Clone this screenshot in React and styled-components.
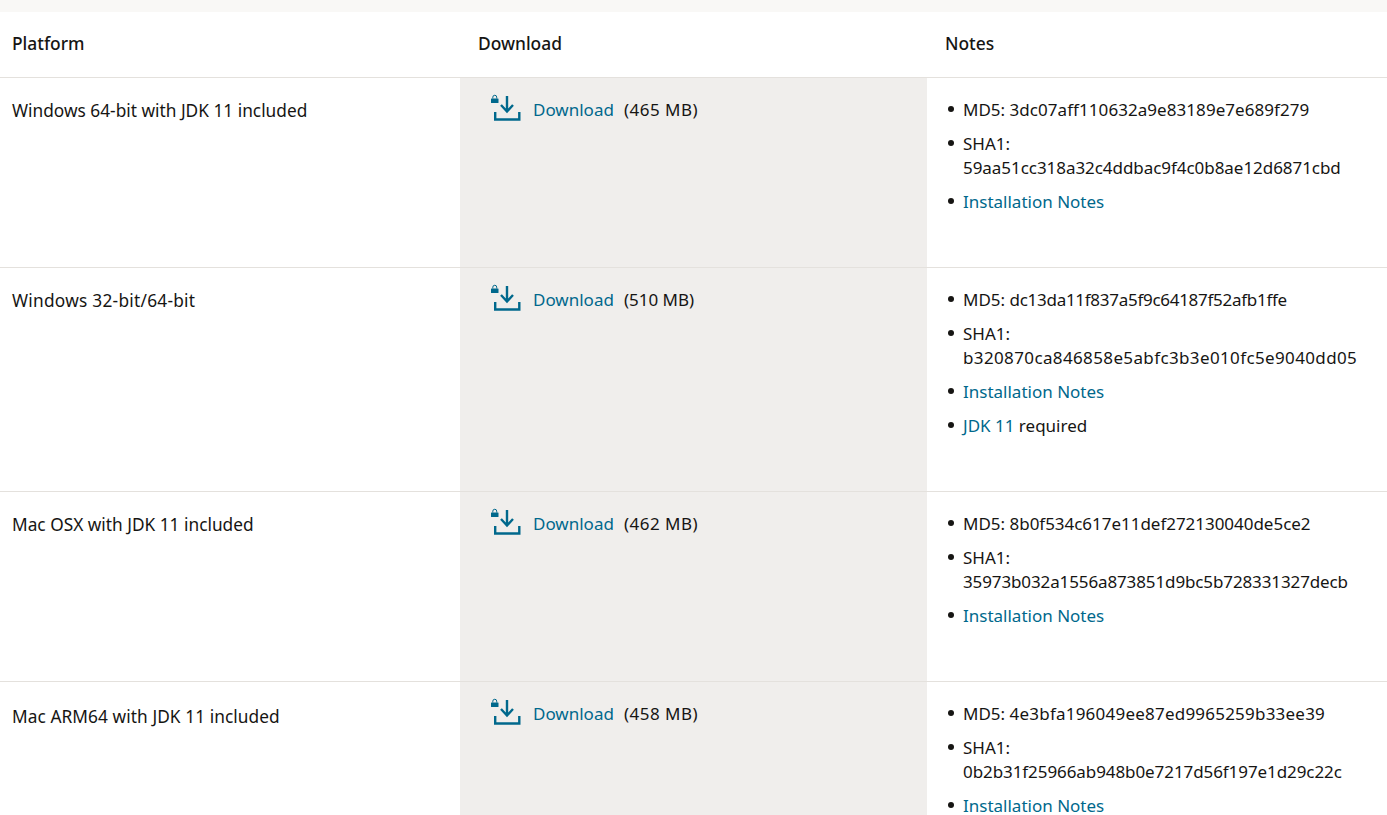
import React from 'react'
import styled, { createGlobalStyle } from 'styled-components'

const GlobalStyle = createGlobalStyle`
  html, body {
    margin: 0;
    padding: 0;
    height: 815px;
    overflow: hidden;
    background: #fff;
    font-family: "Noto Sans", "Open Sans", sans-serif;
    color: #161513;
  }
`

const TopBand = styled.div`
  height: 12px;
  background: #f9f8f6;
`

const Row = styled.div`
  display: grid;
  grid-template-columns: 460px 467px 460px;
  border-bottom: 1px solid #e4e1dd;
  font-size: 17px;
  line-height: 24px;
`

const HeadRow = styled(Row)`
  box-sizing: border-box;
  height: 66px;
  padding-bottom: 3px;
  align-items: center;
  font-weight: 500;
  font-size: 17.4px;
`

const HeadCell = styled.div`
  padding-left: ${(p) => (p.$first ? '12px' : '18px')};
`

const PlatformCell = styled.div`
  padding: ${(p) => (p.$low ? '23px' : '21px')} 12px 0;
  font-size: 17.3px;
`

const DownloadCell = styled.div`
  background: #f0eeec;
  padding: 16px 0 0 30px;
  display: flex;
  align-items: flex-start;
`

const DownloadIcon = styled.svg`
  width: 32px;
  height: 28px;
  margin-right: 11px;
  flex: none;
`

const Link = styled.a`
  color: #00688c;
  text-decoration: none;
`

const DownloadLink = styled(Link)`
  margin-top: 4px;
`

const Size = styled.span`
  margin: 4px 0 0 10px;
`

// the original face has other glyph widths, so each value gets its own tracking
const Tracked = styled.span`
  letter-spacing: ${(p) => p.$track || 0}px;
`

const NotesCell = styled.div`
  padding: 20px 18px 43px;
`

const NotesList = styled.ul`
  list-style: none;
  margin: 0;
  padding: 0;
`

const Note = styled.li`
  position: relative;
  padding-left: 18px;
  margin-bottom: 10px;
  white-space: nowrap;

  &::before {
    content: '';
    position: absolute;
    left: 3px;
    top: 8px;
    width: 6px;
    height: 6px;
    border-radius: 50%;
    background: #161513;
  }
`

const LockDownload = () => (
  <DownloadIcon viewBox="0 0 32 28" aria-hidden="true">
    <rect x="1" y="4.500" width="7.500" height="4.500" rx="0.5" fill="#00688c" />
    <path d="M2.800 4.500V3.200a1.950 1.950 0 0 1 3.900 0v1.300" fill="none" stroke="#00688c" strokeWidth="1" />
    <path d="M17 2v15.500M11 11l6 6.500 6-6.500" fill="none" stroke="#00688c" strokeWidth="2.400" />
    <path d="M5.200 18v7.500h24.100V18" fill="none" stroke="#00688c" strokeWidth="2.400" />
  </DownloadIcon>
)

const rows = [
  {
    platform: 'Windows 64-bit with JDK 11 included',
    size: '(465 MB)',
    md5: '3dc07aff110632a9e83189e7e689f279',
    sha1: '59aa51cc318a32c4ddbac9f4c0b8ae12d6871cbd',
    tracks: { platform: 0, size: 0.5, md5: 0.06, sha1: -0.05 },
  },
  {
    platform: 'Windows 32-bit/64-bit',
    size: '(510 MB)',
    md5: 'dc13da11f837a5f9c64187f52afb1ffe',
    sha1: 'b320870ca846858e5abfc3b3e010fc5e9040dd05',
    needsJdk: true,
    tracks: { platform: 0.25, size: 0, md5: -0.28, sha1: 0.37 },
  },
  {
    platform: 'Mac OSX with JDK 11 included',
    size: '(462 MB)',
    md5: '8b0f534c617e11def272130040de5ce2',
    sha1: '35973b032a1556a873851d9bc5b728331327decb',
    tracks: { platform: 0, size: 0.5, md5: -0.03, sha1: -0.12 },
  },
  {
    platform: 'Mac ARM64 with JDK 11 included',
    size: '(458 MB)',
    md5: '4e3bfa196049ee87ed9965259b33ee39',
    sha1: '0b2b31f25966ab948b0e7217d56f197e1d29c22c',
    lowLabel: true,
    tracks: { platform: 0.07, size: 0.5, md5: 0.22, sha1: -0.08 },
  },
]

export default function App() {
  return (
    <>
      <GlobalStyle />
      <TopBand />
      <HeadRow>
        <HeadCell $first>Platform</HeadCell>
        <HeadCell>Download</HeadCell>
        <HeadCell>Notes</HeadCell>
      </HeadRow>
      {rows.map((row) => (
        <Row key={row.md5}>
          <PlatformCell $low={row.lowLabel}>
            <Tracked $track={row.tracks.platform}>{row.platform}</Tracked>
          </PlatformCell>
          <DownloadCell>
            <LockDownload />
            <DownloadLink href="#">Download</DownloadLink>
            <Size>
              <Tracked $track={row.tracks.size}>{row.size}</Tracked>
            </Size>
          </DownloadCell>
          <NotesCell>
            <NotesList>
              <Note>
                MD5: <Tracked $track={row.tracks.md5}>{row.md5}</Tracked>
              </Note>
              <Note>
                SHA1:
                <br />
                <Tracked $track={row.tracks.sha1}>{row.sha1}</Tracked>
              </Note>
              <Note>
                <Link href="#">Installation Notes</Link>
              </Note>
              {row.needsJdk && (
                <Note>
                  <Link href="#">JDK 11</Link> required
                </Note>
              )}
            </NotesList>
          </NotesCell>
        </Row>
      ))}
    </>
  )
}
